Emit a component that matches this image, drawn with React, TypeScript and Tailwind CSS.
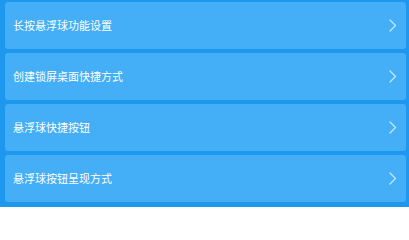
const items = [
  '长按悬浮球功能设置',
  '创建锁屏桌面快捷方式',
  '悬浮球快捷按钮',
  '悬浮球按钮呈现方式',
];

function Chevron() {
  return (
    <svg width="8" height="13" viewBox="0 0 8 13" fill="none" className="shrink-0">
      <path d="M1 1l5.5 5.5L1 12" stroke="#bfe9ff" strokeWidth="1.3" strokeLinecap="round" strokeLinejoin="round" />
    </svg>
  );
}

export default function App() {
  return (
    <div
      className="w-[409px] h-[207px] bg-[#1d98ee] pt-[2px] px-[4px] flex flex-col gap-[4px]"
      style={{ fontFamily: '"Noto Sans CJK SC", "Noto Sans", sans-serif' }}
    >
      {items.map((label) => (
        <div
          key={label}
          className="h-[47px] ml-[1px] mr-[-1px] rounded-[3px] bg-[#44aef6] flex items-center justify-between pl-[8px] pr-[9px]"
        >
          <span className="text-[11px] text-white leading-none">{label}</span>
          <Chevron />
        </div>
      ))}
    </div>
  );
}
